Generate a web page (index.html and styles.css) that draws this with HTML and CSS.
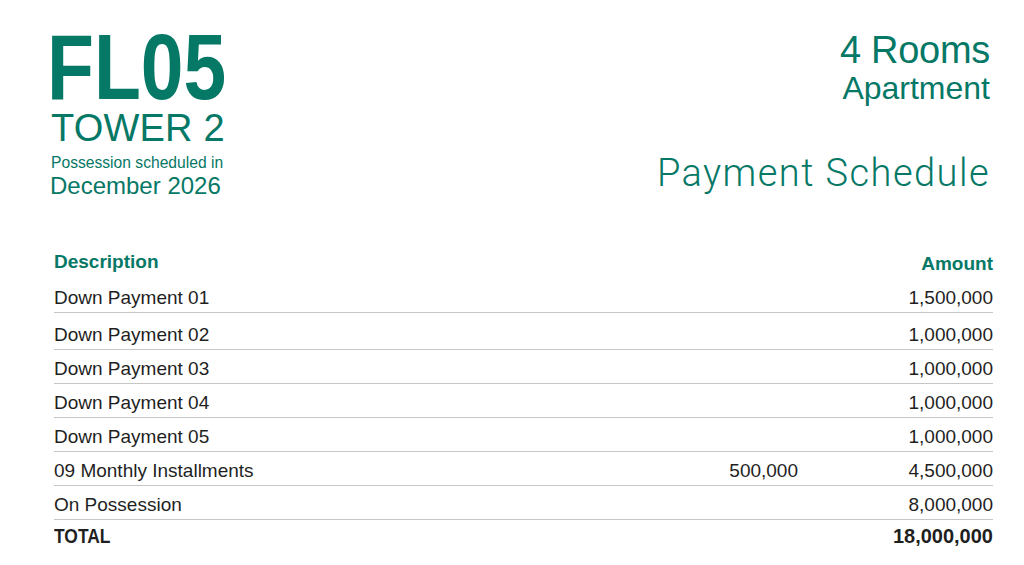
FILE: index.html
```html
<!DOCTYPE html>
<html lang="en">
<head>
<meta charset="utf-8">
<title>FL05 Tower 2 - Payment Schedule</title>
<link rel="stylesheet" href="styles.css">
</head>
<body>
<main class="page">
  <header class="top">
    <div class="unit">
      <div class="unit-code"><span class="squeeze squeeze-code">FL05</span></div>
      <div class="unit-tower">TOWER 2</div>
      <div class="unit-note"><span class="squeeze squeeze-note">Possession scheduled in</span></div>
      <div class="unit-date">December 2026</div>
    </div>
    <div class="kind">
      <div class="kind-rooms">4 Rooms</div>
      <div class="kind-type">Apartment</div>
      <h1 class="kind-title">Payment Schedule</h1>
    </div>
  </header>

  <section class="schedule">
    <div class="row row-head">
      <div class="cell-desc">Description</div>
      <div class="cell-mid"></div>
      <div class="cell-amt cell-amt-head">Amount</div>
    </div>
    <div class="row row-first">
      <div class="cell-desc">Down Payment 01</div>
      <div class="cell-mid"></div>
      <div class="cell-amt">1,500,000</div>
    </div>
    <div class="row row-second">
      <div class="cell-desc">Down Payment 02</div>
      <div class="cell-mid"></div>
      <div class="cell-amt">1,000,000</div>
    </div>
    <div class="row">
      <div class="cell-desc">Down Payment 03</div>
      <div class="cell-mid"></div>
      <div class="cell-amt">1,000,000</div>
    </div>
    <div class="row">
      <div class="cell-desc">Down Payment 04</div>
      <div class="cell-mid"></div>
      <div class="cell-amt">1,000,000</div>
    </div>
    <div class="row">
      <div class="cell-desc">Down Payment 05</div>
      <div class="cell-mid"></div>
      <div class="cell-amt">1,000,000</div>
    </div>
    <div class="row">
      <div class="cell-desc">09 Monthly Installments</div>
      <div class="cell-mid">500,000</div>
      <div class="cell-amt">4,500,000</div>
    </div>
    <div class="row">
      <div class="cell-desc">On Possession</div>
      <div class="cell-mid"></div>
      <div class="cell-amt">8,000,000</div>
    </div>
    <div class="row row-total">
      <div class="cell-desc"><span class="squeeze squeeze-total">TOTAL</span></div>
      <div class="cell-mid"></div>
      <div class="cell-amt total-amt">18,000,000</div>
    </div>
  </section>
</main>
</body>
</html>
```

FILE: styles.css
```css
html, body {
  margin: 0;
  padding: 0;
  background: #ffffff;
}

body {
  font-family: "Liberation Sans", Arial, sans-serif;
  color: #1f1f1f;
  width: 1024px;
  height: 565px;
  overflow: hidden;
}

.page {
  padding: 28px 31px 0 52px;
}

.top {
  display: flex;
  justify-content: space-between;
  align-items: flex-start;
  color: #067866;
}

.unit {
  display: flex;
  flex-direction: column;
}

.squeeze {
  display: inline-block;
  transform-origin: left center;
  white-space: nowrap;
}

.unit-code {
  font-weight: 700;
  font-size: 92px;
  line-height: 78px;
  margin-left: -5px;
}

.squeeze-code {
  transform: scaleX(0.835);
}

.unit-tower {
  font-size: 38px;
  line-height: 44px;
  margin-left: -1px;
  letter-spacing: 0.2px;
}

.unit-note {
  font-size: 17px;
  line-height: 22px;
  margin-top: 2px;
  margin-left: -1px;
}

.squeeze-note {
  transform: scaleX(0.92);
}

.unit-date {
  font-size: 24px;
  line-height: 24px;
  margin-left: -2px;
}

.kind {
  display: flex;
  flex-direction: column;
  align-items: flex-end;
  padding-right: 3px;
}

.kind-rooms {
  font-size: 38px;
  line-height: 44px;
  letter-spacing: -0.3px;
}

.kind-type {
  font-size: 32px;
  line-height: 32px;
}

.kind-title {
  margin: 50px 0 0 0;
  font-family: Roboto, "Liberation Sans", sans-serif;
  font-weight: 300;
  font-size: 38px;
  line-height: 38px;
  letter-spacing: 1.45px;
}

.schedule {
  margin: 54px 0 0 2px;
  display: flex;
  flex-direction: column;
}

.row {
  display: flex;
  align-items: flex-start;
  font-size: 19px;
  line-height: 20px;
  padding: 9px 0 4px 0;
  border-bottom: 1px solid #c6c6c6;
}

.row-head {
  padding: 0;
  border-bottom: none;
  color: #067866;
  font-weight: 700;
}

.row-first {
  padding-top: 14px;
}

.row-second {
  padding-top: 12px;
}

.row-total {
  border-bottom: none;
  padding-top: 6px;
}

.cell-desc {
  flex: 1;
}

.cell-mid {
  width: 120px;
  text-align: right;
}

.cell-amt {
  width: 195px;
  text-align: right;
}

.cell-amt-head {
  padding-top: 2px;
}

.squeeze-total {
  font-weight: 700;
  font-size: 21px;
  transform: scaleX(0.83);
}

.total-amt {
  font-weight: 700;
  font-size: 20px;
}
```
